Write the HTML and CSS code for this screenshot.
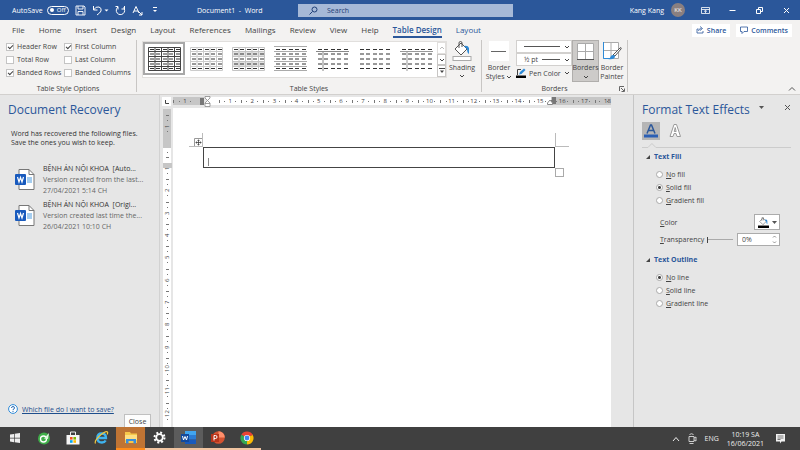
FILE: index.html
```html
<!DOCTYPE html>
<html lang="en">
<head>
  <meta charset="UTF-8">
  <meta name="viewport" content="width=device-width, initial-scale=1.0">
  <title>Document1 - Word</title>
  <link rel="stylesheet" href="styles.css">
</head>
<body>
  <!-- shared shapes -->
  <svg class="defs" width="0" height="0">
    <defs>
      <path id="dashes" d="M2 3.5h4M8 3.5h4M15 3.5h4M21 3.5h4M28 3.5h4M2 8h4M8 8h4M15 8h4M21 8h4M28 8h4M2 13h4M8 13h4M15 13h4M21 13h4M28 13h4M2 18h4M8 18h4M15 18h4M21 18h4M28 18h4M2 22.5h4M8 22.5h4M15 22.5h4M21 22.5h4M28 22.5h4" stroke="#333" fill="none"/>
      <path id="gridlines" d="M.5 1.5h32v23h-32zM.5 5.500h32M.5 10.500h32M.5 15.500h32M.5 20.500h32M7 1v24M13.500 1v24M20 1v24M26.500 1v24" fill="none"/>
      <g id="doc">
        <path d="M4 .5h10l5 5v15H4z" fill="#fff" stroke="#777"/>
        <path d="M14 .5v5h5" fill="none" stroke="#777"/>
        <path d="M12 9h5M12 11h5M12 13h5" stroke="#4a9be0"/>
        <rect x="0" y="5" width="11" height="11" rx="1" fill="#185abd"/>
        <path d="M2.500 8l1.500 5 1.500-4.500L7 13l1.500-5" fill="none" stroke="#fff" stroke-width="1.200"/>
      </g>
      <g id="bucket">
        <path d="M3 8l6-6 6 6-6 6z" fill="#fff" stroke="#555"/>
        <path d="M7 7V2q0-1.500 1.500-1.500T10 2v4" fill="none" stroke="#555"/>
        <path d="M12 5q4-1 5 2v6q-2-1-2-5z" fill="#2e8bd8"/>
      </g>
      <path id="down" d="M1 1l2 2 2-2" fill="none" stroke="currentColor"/>
    </defs>
  </svg>

  <header class="titlebar">
    <div class="quick">
      <label class="autosave">AutoSave <button class="switch"><i></i>Off</button></label>
      <button aria-label="Save"><svg width="11" height="11" viewBox="0 0 11 11"><path d="M1 1h8l1 1v8H1zM3 1v3h5V1M3 10V6.500h5V10" fill="none" stroke="#fff" stroke-width=".9"/></svg></button>
      <button aria-label="Undo"><svg width="17" height="11" viewBox="0 0 17 11"><path d="M1.500 1v4h4M1.500 5Q4 1 7 2t2 4q-1 2-4 4" fill="none" stroke="#fff"/><path d="M12.500 4.500h4l-2 2z" fill="#fff"/></svg></button>
      <button aria-label="Repeat"><svg width="11" height="11" viewBox="0 0 11 11"><path d="M3 2a4.200 4.200 0 1 0 5.500.5M9.500 1v3H6.500M.5 1.500H3v3" fill="none" stroke="#fff"/></svg></button>
      <button aria-label="Format"><svg width="11" height="11" viewBox="0 0 11 11"><path d="M1 8l3-6.500L7 8M2 6h4M6 6l4 4M7 10h3V7" fill="none" stroke="#fff"/></svg></button>
      <button aria-label="Customize"><svg class="customize" width="6" height="6" viewBox="0 0 6 6"><path d="M1 .5h4" stroke="#fff"/><path d="M1 3h4L3 5z" fill="#fff"/></svg></button>
    </div>
    <div class="doc-title">Document1 &nbsp;-&nbsp; Word</div>
    <label class="search">
      <svg width="9" height="9" viewBox="0 0 9 9"><circle cx="5.500" cy="3.500" r="2.500" fill="none" stroke="#1f3f77"/><path d="M3.500 5.500L.5 8.500" stroke="#1f3f77"/></svg>
      <input type="text" placeholder="Search" aria-label="Search">
    </label>
    <div class="account">Kang Kang <span class="avatar">KK</span></div>
    <div class="window-buttons">
      <button aria-label="Ribbon display"><svg width="9" height="9" viewBox="0 0 9 9"><path d="M.5 1.500h8v6h-8zM.5 3.500h8M4.500 7V4.500M3 5.500l1.500-1 1.500 1" fill="none" stroke="#fff" stroke-width=".8"/></svg></button>
      <button aria-label="Minimize"><svg width="9" height="9" viewBox="0 0 9 9"><path d="M1.500 4.500h6" stroke="#fff"/></svg></button>
      <button aria-label="Restore"><svg width="9" height="9" viewBox="0 0 9 9"><path d="M1.500 3.500h4v4h-4zM3.500 3V1.500h4v4H6" fill="none" stroke="#fff"/></svg></button>
      <button aria-label="Close window"><svg width="9" height="9" viewBox="0 0 9 9"><path d="M2 2l5 5M7 2L2 7" stroke="#fff"/></svg></button>
    </div>
  </header>

  <nav class="tabs">
    <a href="#">File</a>
    <a href="#">Home</a>
    <a href="#">Insert</a>
    <a href="#">Design</a>
    <a href="#">Layout</a>
    <a href="#">References</a>
    <a href="#">Mailings</a>
    <a href="#">Review</a>
    <a href="#">View</a>
    <a href="#">Help</a>
    <a href="#" class="active">Table Design</a>
    <a href="#" class="context">Layout</a>
    <div class="tab-actions">
      <button><svg width="8" height="8" viewBox="0 0 8 8"><path d="M2.500 3H1v4h6V5M2.500 5q0-2.500 3-2.500M4 .5l2.500 2-2.500 2" fill="none" stroke="#2b579a" stroke-width=".8"/></svg>Share</button>
      <button><svg width="8" height="8" viewBox="0 0 8 8"><path d="M.5 1h7v4.500H4l-2 2v-2H.5z" fill="none" stroke="#2b579a" stroke-width=".8"/></svg>Comments</button>
    </div>
  </nav>

  <section class="ribbon">
    <div class="group options">
      <div class="checks">
        <label><input type="checkbox" checked>Header Row</label>
        <label><input type="checkbox" checked>First Column</label>
        <label><input type="checkbox">Total Row</label>
        <label><input type="checkbox">Last Column</label>
        <label><input type="checkbox" checked>Banded Rows</label>
        <label><input type="checkbox">Banded Columns</label>
      </div>
      <div class="group-name">Table Style Options</div>
    </div>

    <div class="group styles">
      <div class="group-body">
        <div class="gallery">
          <button class="thumb selected" aria-label="Table Grid"><svg width="33" height="26"><use href="#gridlines" stroke="#444"/><use href="#dashes"/></svg></button>
          <button class="thumb" aria-label="Grid Light"><svg width="33" height="26"><use href="#gridlines" stroke="#ccc"/><use href="#dashes"/></svg></button>
          <button class="thumb" aria-label="Plain Table 1"><svg width="33" height="26"><path d="M0 5h33v5H0zM0 15h33v5H0z" fill="#e2e2e2"/><use href="#gridlines" stroke="#c4c4c4"/><use href="#dashes"/></svg></button>
          <button class="thumb" aria-label="Plain Table 2"><svg width="33" height="26"><path d="M0 .5h33M0 5.500h33M0 10.500h33M0 15.500h33M0 20.500h33M0 24.500h33" stroke="#aaa"/><use href="#dashes"/></svg></button>
          <button class="thumb" aria-label="Plain Table 3"><svg width="33" height="26"><path d="M0 5.500h33M7 5v20" stroke="#888" fill="none"/><use href="#dashes"/></svg></button>
          <button class="thumb" aria-label="Plain Table 4"><svg width="33" height="26"><use href="#dashes"/></svg></button>
          <button class="thumb" aria-label="Plain Table 5"><svg width="33" height="26"><path d="M0 5.500h33M7 5v20" stroke="#999" fill="none"/><use href="#dashes"/></svg></button>
          <div class="scroller">
            <button class="off" aria-label="Up"><svg width="6" height="4"><path d="M1 3l2-2 2 2" fill="none" stroke="#bbb"/></svg></button>
            <button aria-label="Down"><svg width="6" height="4"><use href="#down"/></svg></button>
            <button aria-label="More"><svg width="6" height="6"><path d="M0 .5h6" stroke="#444"/><path d="M1 2.500h4l-2 2.500z" fill="#444"/></svg></button>
          </div>
        </div>
        <button class="big shading">
          <svg width="20" height="20" viewBox="0 0 20 20"><use href="#bucket"/><rect x="1" y="15.500" width="18" height="4" fill="#fff" stroke="#aaa"/></svg>
          <span>Shading</span>
          <svg width="6" height="4"><use href="#down"/></svg>
        </button>
      </div>
      <div class="group-name">Table Styles</div>
    </div>

    <div class="group borders">
      <div class="group-body">
        <button class="big border-styles">
          <svg width="20" height="20"><path d="M0 0h20v20H0z" fill="#fff"/><path d="M2 10.500h15" stroke="#666"/></svg>
          <span>Border<br>Styles <svg width="6" height="4"><use href="#down"/></svg></span>
        </button>
        <div class="pen">
          <button class="pen-box"><i></i><svg width="6" height="4"><use href="#down"/></svg></button>
          <button class="pen-box">½ pt<i></i><svg width="6" height="4"><use href="#down"/></svg></button>
          <button class="pen-color"><svg width="10" height="10" viewBox="0 0 10 10"><path d="M1.500 7V1.500H5" fill="none" stroke="#444"/><path d="M3 6.500l1-2.500L8 .5 9.500 2l-4 4z" fill="#2e8bd8"/><path d="M0 7.500h10V10H0z" fill="#000"/></svg>Pen Color <svg width="6" height="4"><use href="#down"/></svg></button>
        </div>
        <button class="big pressed">
          <svg width="17" height="17"><path d="M.5.5h16v16H.5z" fill="#fff" stroke="#aaa"/><path d="M8.500 0v17M0 8.500h17" stroke="#aaa"/><path d="M0 16.500h17" stroke="#555"/></svg>
          <span>Borders</span>
          <svg width="6" height="4"><use href="#down"/></svg>
        </button>
        <button class="big painter">
          <svg width="19" height="19" viewBox="0 0 19 19"><path d="M.5.5h15v16H.5z" fill="#fff" stroke="#aaa"/><path d="M8 0v17M0 8.500h16" stroke="#aaa"/><path d="M.5 0v16.500H8" fill="none" stroke="#2e8bd8"/><path d="M10 13l7.500-7.500q1 0 .5 1.500L12 14z" fill="#fff" stroke="#555"/><path d="M5 17q2 0 3-3 2-2 4 0 0 4-7 3z" fill="#2e8bd8"/></svg>
          <span>Border<br>Painter</span>
        </button>
      </div>
      <div class="group-name">Borders <svg class="launcher" width="6" height="6"><path d="M.5 5V.5H5M2 2l3 3M5.500 2.500v3h-3" fill="none" stroke="#666"/></svg></div>
    </div>
    <button class="collapse" aria-label="Collapse ribbon"><svg width="8" height="6"><path d="M1 4.500l3-3 3 3" fill="none" stroke="#555"/></svg></button>
  </section>

  <main>
    <aside class="recovery">
      <h2>Document Recovery</h2>
      <p class="intro">Word has recovered the following files.<br>Save the ones you wish to keep.</p>
      <ul>
        <li>
          <svg width="20" height="22"><use href="#doc"/></svg>
          <div><b>BỆNH ÁN NỘI KHOA&nbsp; [Auto...</b><span>Version created from the last...</span><span>27/04/2021 5:14 CH</span></div>
        </li>
        <li>
          <svg width="20" height="22"><use href="#doc"/></svg>
          <div><b>BỆNH ÁN NỘI KHOA&nbsp; [Origi...</b><span>Version created last time the...</span><span>26/04/2021 10:10 CH</span></div>
        </li>
      </ul>
      <div class="help"><svg width="10" height="10" viewBox="0 0 10 10"><circle cx="5" cy="5" r="4.400" fill="#fff" stroke="#2e8bd8"/><path d="M3.500 4q0-1.500 1.500-1.500T6.500 4Q6.500 5 5 5.500v.7M5 7v1" fill="none" stroke="#2b6cb5"/></svg><a href="#">Which file do I want to save?</a></div>
      <button class="close">Close</button>
    </aside>

    <div class="ruler-v">
      <div class="tab-stop"><svg width="4" height="4"><path d="M.5 0v3.500H4" fill="none" stroke="#444"/></svg></div>
      <div class="ruler-v-track">
        <div class="v-margin"><span>1</span></div>
        <div class="v-cm"><i></i><span class="row-end">1</span><span>2</span><span>3</span><span>4</span><span>5</span><span>6</span><span>7</span><span>8</span><span>9</span><span>10</span><span>11</span><span>12</span></div>
      </div>
    </div>

    <div class="workspace">
      <div class="ruler-h">
        <div class="h-margin"><span>1</span><svg width="4" height="7"><path d="M0 0h4v7H0z" fill="#777"/></svg></div>
        <svg class="indent" width="7" height="11" viewBox="0 0 7 11"><path d="M1 .5h5v1.500L3.500 4.500 6 7v3.500H1V7l2.500-2.500L1 2zM1 7.500h5" fill="#fff" stroke="#888" stroke-width=".8"/></svg>
        <div class="h-cm"><i></i><span>1</span><span>2</span><span>3</span><span>4</span><span>5</span><span>6</span><span>7</span><span>8</span><span>9</span><span>10</span><span>11</span><span>12</span><span>13</span><span>14</span><span>15</span><span class="out">16</span><span class="out">17</span><span class="out last">18</span>
          <svg class="right-indent" width="9" height="8" viewBox="0 0 9 8"><path d="M5 0h4v7H5z" fill="#777"/><path d="M.5 7.500V6L3 3l2.500 3v1.500z" fill="#fff" stroke="#888"/></svg>
        </div>
      </div>
      <div class="page">
        <div class="table-area">
          <svg class="mover" width="9" height="9"><path d="M.5.5h8v8h-8z" fill="#fff" stroke="#999"/><path d="M4.500 1.500v6M1.500 4.500h6M3.500 2.500h2M3.500 6.500h2M2.500 3.500v2M6.500 3.500v2" stroke="#444" stroke-width=".8"/></svg>
          <i class="mark left"></i>
          <i class="mark right"></i>
          <table><tr><td><i class="caret"></i></td></tr></table>
          <i class="resizer"></i>
        </div>
      </div>
    </div>

    <aside class="effects">
      <div class="effects-head">
        <h2>Format Text Effects</h2>
        <button aria-label="Options"><svg width="5" height="3"><path d="M0 0h5L2.500 3z" fill="#555"/></svg></button>
        <button aria-label="Close pane"><svg width="7" height="7"><path d="M1 1l5 5M6 1L1 6" stroke="#555"/></svg></button>
      </div>
      <div class="effect-tabs">
        <button class="on" aria-label="Text Fill and Outline"><svg width="18" height="18" viewBox="0 0 18 18"><path d="M5 11.500L8.500 3h1L13 11.500M6.500 8.500h5" fill="none" stroke="#2b579a" stroke-width="1.500"/><path d="M2 12.500h14v3H2z" fill="#2b5fb4"/></svg></button>
        <button aria-label="Text Effects"><svg width="18" height="18" viewBox="0 0 18 18"><path d="M8 2.500h2.500l4 12H11l-1-3H8l-1 3H4z" fill="#fff" stroke="#999"/><path d="M9.200 5.500l1 4h-2z" fill="#e6e6e6" stroke="#888" stroke-width=".8"/></svg></button>
      </div>
      <svg class="rule" height="5" viewBox="0 0 150 5"><path d="M0 4.500h6l4-4 4 4h136" fill="none" stroke="#ccc"/></svg>
      <fieldset>
        <legend>Text Fill</legend>
        <label><input type="radio" name="fill"><span><u>N</u>o fill</span></label>
        <label><input type="radio" name="fill" checked><span><u>S</u>olid fill</span></label>
        <label><input type="radio" name="fill"><span><u>G</u>radient fill</span></label>
      </fieldset>
      <div class="field">
        <span><u>C</u>olor</span>
        <button class="color" aria-label="Color"><svg width="11" height="11" viewBox="0 0 20 20"><use href="#bucket"/><path d="M0 15.500h20v4.500H0z" fill="#000"/></svg><svg width="5" height="3"><path d="M0 0h5L2.500 3z" fill="#555"/></svg></button>
      </div>
      <div class="field">
        <label for="transparency"><u>T</u>ransparency</label>
        <input id="transparency" type="range" value="0">
        <div class="spin"><input type="text" value="0%" aria-label="Transparency value"><svg width="5" height="9"><path d="M1 2.500L2.500 1 4 2.500M1 6.500L2.500 8 4 6.500" fill="none" stroke="#777" stroke-width=".8"/></svg></div>
      </div>
      <fieldset class="outline">
        <legend>Text Outline</legend>
        <label><input type="radio" name="line" checked><span><u>N</u>o line</span></label>
        <label><input type="radio" name="line"><span><u>S</u>olid line</span></label>
        <label><input type="radio" name="line"><span><u>G</u>radient line</span></label>
      </fieldset>
    </aside>
  </main>

  <footer class="taskbar">
    <button aria-label="Start"><svg width="12" height="12" viewBox="0 0 12 12"><path d="M1 2.500l4-.6v3.800H1zM5.700 1.800L11 1v4.700H5.700zM1 6.400h4v3.800l-4-.6zM5.700 6.400H11V11l-5.300-.8z" fill="#eee"/></svg></button>
    <button aria-label="Browser"><svg width="14" height="14" viewBox="0 0 14 14"><circle cx="7" cy="7.500" r="6" fill="#3fae49"/><circle cx="6.500" cy="8" r="3" fill="none" stroke="#fff" stroke-width="1.300"/><path d="M7 7.500L12 2l-1 6z" fill="#dff5df"/></svg></button>
    <button aria-label="Store"><svg width="14" height="14" viewBox="0 0 14 14"><path d="M4.500 4V1h5v3" fill="none" stroke="#eee"/><path d="M.5 4h13v9.500H.5z" fill="#f5f5f5"/><path d="M4 6h2.600v2.600H4z" fill="#f25022"/><path d="M7.400 6H10v2.600H7.400z" fill="#7fba00"/><path d="M4 9.200h2.600v2.600H4z" fill="#00a4ef"/><path d="M7.400 9.200H10v2.600H7.400z" fill="#ffb900"/></svg></button>
    <button aria-label="Internet"><svg width="15" height="15" viewBox="0 0 15 15"><path d="M3.500 8H12q0-4.500-4.300-4.500T3.300 8q0 4.500 4.700 4.500 2.500 0 3.700-2" fill="none" stroke="#3fb4f0" stroke-width="2.300"/><path d="M1.500 13.500Q0 11 6 5.500 12 .5 13.500 2q.5 1-.5 2.500" fill="none" stroke="#f3c73c" stroke-width="1.200"/></svg></button>
    <button class="orange" aria-label="File Explorer"><svg width="14" height="13" viewBox="0 0 14 13"><path d="M1 1h5l1 1.500h6V12H1z" fill="#f7c84b"/><path d="M1 4h12v5H1z" fill="#ffdf83"/><path d="M2 12.500V8h10v4.500H9.500V10h-5v2.500z" fill="#3a8edb"/></svg></button>
    <button class="open" aria-label="Settings"><svg width="13" height="13" viewBox="0 0 13 13"><circle cx="6.500" cy="6.500" r="5" fill="none" stroke="#fff" stroke-width="2" stroke-dasharray="2 1.930"/><circle cx="6.500" cy="6.500" r="3.300" fill="none" stroke="#fff" stroke-width="1.800"/></svg></button>
    <button class="open current" aria-label="Word"><svg width="15" height="13" viewBox="0 0 15 13"><path d="M4 0h11v4H4z" fill="#41a5ee"/><path d="M4 4h11v4.500H4z" fill="#2b7cd3"/><path d="M4 8.500h11V13H4z" fill="#185abd"/><path d="M0 3h8v8H0z" fill="#124a9e"/><path d="M1.500 5l1 4L4 5.500 5.500 9l1-4" fill="none" stroke="#fff"/></svg></button>
    <button class="open" aria-label="PowerPoint"><svg width="14" height="13" viewBox="0 0 14 13"><circle cx="7.500" cy="6.500" r="6.300" fill="#d35230"/><path d="M7.500.2a6.300 6.300 0 0 1 6.300 6.300H7.500z" fill="#ff8f6b"/><path d="M0 3h8v8H0z" fill="#b7351b"/><path d="M3 9.500v-5h1.500q1.500 0 1.500 1.500T4.500 7.500H3" fill="none" stroke="#fff"/></svg></button>
    <button class="open" aria-label="Chrome"><svg width="14" height="14" viewBox="0 0 14 14"><path d="M7 7L1.370 3.750A6.500 6.500 0 0 1 12.630 3.750z" fill="#e94335"/><path d="M7 7L12.630 3.750A6.500 6.500 0 0 1 7 13.500z" fill="#fbbc05"/><path d="M7 7v6.500A6.500 6.500 0 0 1 1.370 3.750z" fill="#34a853"/><path d="M7 3.750h5.630" stroke="#e94335"/><circle cx="7" cy="7" r="3.100" fill="#fff"/><circle cx="7" cy="7" r="2.400" fill="#4285f4"/></svg></button>
    <div class="tray">
      <svg width="8" height="6"><path d="M1 5l3-3.500L7 5" fill="none" stroke="#eee"/></svg>
      <svg width="9" height="11" viewBox="0 0 9 11"><path d="M1 3.500h5v5H1zM6 5l2-1v4L6 7M1.500 1.500q2-1.500 4 0M1.500 10.500h4" fill="none" stroke="#ddd" stroke-width=".9"/></svg>
      <span>ENG</span>
      <time>10:19 SA<br>16/06/2021</time>
      <svg width="11" height="11" viewBox="0 0 11 11"><path d="M1 1h9v7.500H6.500L5 10.500v-2H1z" fill="#f2f2f2"/><path d="M2.500 3h6M2.500 5h6M2.500 6.500h3" stroke="#555" stroke-width=".8"/></svg>
    </div>
  </footer>
</body>
</html>
```
FILE: styles.css
```css
* {
  box-sizing: border-box;
}

body {
  margin: 0;
  height: 100vh;
  display: flex;
  flex-direction: column;
  overflow: hidden;
  font-family: "Open Sans", "Noto Sans", sans-serif;
  font-size: 7px;
  line-height: 9px;
  color: #444;
  background: #e6e6e6;
}

svg {
  display: block;
  flex: none;
}

.defs {
  position: absolute;
}

button, input {
  font: inherit;
  color: inherit;
  margin: 0;
  padding: 0;
  border: 0;
  background: none;
}

button {
  display: flex;
  align-items: center;
  justify-content: center;
}

a {
  color: inherit;
  text-decoration: none;
}

h2 {
  margin: 0;
  font-size: 12px;
  line-height: 16px;
  font-weight: normal;
  color: #2b579a;
}

/* Title bar */
.titlebar {
  flex: none;
  height: 20px;
  display: flex;
  align-items: center;
  background: #2b579a;
  color: #fff;
}

.quick {
  display: flex;
  align-items: center;
  gap: 6px;
  width: 197px;
  padding-left: 12px;
}

.autosave {
  display: flex;
  align-items: center;
  gap: 4px;
}

.switch {
  width: 22px;
  height: 9px;
  gap: 3px;
  border: 1px solid #fff;
  border-radius: 5px;
  font-size: 6px;
}

.switch i {
  width: 4px;
  height: 4px;
  border-radius: 50%;
  background: #fff;
}

.customize {
  margin-left: 3px;
}

.doc-title {
  width: 101px;
}

.search {
  width: 215px;
  height: 13px;
  display: flex;
  align-items: center;
  gap: 9px;
  padding-left: 11px;
  background: #a6b9d7;
}

.search input {
  flex: 1;
  min-width: 0;
}

.search input::placeholder {
  color: #1f3f77;
  opacity: 1;
}

.account {
  display: flex;
  align-items: center;
  gap: 7px;
  margin-left: auto;
}

.avatar {
  width: 14px;
  height: 14px;
  line-height: 14px;
  border-radius: 50%;
  background: #8a7f80;
  font-size: 6px;
  text-align: center;
}

.window-buttons {
  display: flex;
  gap: 18px;
  padding: 0 9px 0 16px;
}

/* Tabs */
.tabs {
  flex: none;
  height: 20px;
  display: flex;
  align-items: center;
  gap: 14px;
  padding: 0 8px 0 12px;
  background: #f3f2f1;
  font-size: 8px;
  line-height: 13px;
}

.tabs a {
  border-bottom: 2px solid transparent;
}

.tabs .active {
  color: #2b579a;
  font-weight: 600;
  border-color: #2b579a;
}

.tabs .context {
  color: #2b579a;
}

.tab-actions {
  display: flex;
  gap: 6px;
  margin-left: auto;
}

.tab-actions button {
  height: 13px;
  gap: 3px;
  padding: 0 4px;
  background: #fff;
  color: #2b579a;
  font-size: 7px;
  font-weight: 600;
}

/* Ribbon */
.ribbon {
  flex: none;
  height: 55px;
  display: flex;
  background: #f3f2f1;
  border-bottom: 1px solid #d2d0ce;
}

.group {
  display: flex;
  flex-direction: column;
  justify-content: space-between;
  margin-bottom: 2px;
  border-right: 1px solid #c8c6c4;
}

.group-name {
  display: flex;
  justify-content: center;
  align-items: center;
  line-height: 7px;
}

.launcher {
  margin-left: 51px;
  margin-right: -57px;
}

.group-body {
  display: flex;
}

.options {
  width: 137px;
}

.styles {
  width: 345px;
}

.borders {
  width: 146px;
}

.checks {
  display: grid;
  grid-template-columns: 58px 1fr;
  row-gap: 4px;
  padding: 2px 0 0 6px;
}

.checks label {
  display: flex;
  align-items: center;
  gap: 3px;
  white-space: nowrap;
}

.checks input {
  appearance: none;
  width: 8px;
  height: 8px;
  border: 1px solid #c4c4c4;
  background: #fff;
}

.checks input:checked::before {
  content: "";
  display: block;
  width: 4px;
  height: 2px;
  margin: 1px;
  border: solid #444;
  border-width: 0 0 1px 1px;
  transform: rotate(-45deg);
}

.gallery {
  display: flex;
  margin: 1px 0 0 5px;
  border: 1px solid #e1dfdd;
  background: #fff;
}

.thumb {
  width: 42px;
  height: 33px;
}

.thumb.selected {
  border: 2px solid #a8a8a8;
}

.scroller {
  display: flex;
  flex-direction: column;
  width: 9px;
}

.scroller button {
  flex: 1;
  border: 1px solid #c8c6c4;
}

.scroller .off {
  border-color: #e1dfdd;
}

.big {
  flex-direction: column;
  justify-content: flex-start;
  gap: 2px;
  line-height: 9px;
}

.big span svg, .pen-color svg {
  display: inline-block;
}

.shading {
  margin-left: auto;
  width: 30px;
  padding-top: 1px;
  margin-right: 4px;
}

.border-styles {
  width: 34px;
  padding-top: 1px;
}

.pen {
  width: 56px;
}

.pen-box {
  width: 100%;
  height: 13px;
  gap: 4px;
  padding: 0 1px 0 7px;
  border: 1px solid #d2d0ce;
  background: #fff;
}

.pen-box i {
  flex: 1;
  height: 1px;
  background: #555;
}

.pen-color {
  margin-top: 2px;
  gap: 3px;
  white-space: nowrap;
}

.pressed {
  width: 27px;
  height: 42px;
  padding-top: 2px;
  gap: 3px;
  border: 1px solid #b0aeac;
  background: #cdcbc9;
}

.painter {
  width: 26px;
  padding-top: 2px;
}

.collapse {
  align-self: flex-end;
  margin: 0 4px 2px auto;
}

/* Main area */
main {
  flex: 1;
  min-height: 0;
  display: flex;
}

.recovery {
  width: 160px;
  display: flex;
  flex-direction: column;
  padding: 7px 8px 0;
  border-right: 1px solid #d2d2d2;
}

.intro {
  margin: 11px 0 0 3px;
  color: #333;
  white-space: nowrap;
}

.recovery ul {
  list-style: none;
  margin: 17px 0 0;
  padding: 0 0 0 7px;
  display: grid;
  gap: 4px;
}

.recovery li {
  display: flex;
  align-items: center;
  gap: 8px;
  white-space: nowrap;
}

.recovery li div {
  display: grid;
  gap: 1px;
  line-height: 10px;
  color: #666;
}

.recovery b {
  font-weight: normal;
  color: #333;
}

.help {
  display: flex;
  align-items: center;
  gap: 4px;
  margin-top: auto;
}

.help a {
  color: #1e4e8c;
  text-decoration: underline;
}

.close {
  align-self: flex-end;
  width: 27px;
  height: 13px;
  border: 1px solid #c0c0c0;
  border-bottom: 0;
  background: #fdfdfd;
}

/* Rulers: tick between numbers, dots at the quarters */
.ruler-v {
  width: 13px;
  display: flex;
  flex-direction: column;
  align-items: center;
  padding-top: 2px;
}

.tab-stop {
  width: 9px;
  height: 9px;
  display: grid;
  place-items: center;
  background: #fff;
}

.ruler-v-track {
  flex: 1;
  min-height: 0;
  width: 8px;
  margin: 3px 0 0 1px;
  display: flex;
  flex-direction: column;
  background: #fff;
  font-size: 6px;
}

.v-margin {
  height: 39px;
  padding-top: 6px;
  background: #c6c6c6;
}

.v-cm {
  flex: 1;
  min-height: 0;
  display: grid;
  grid-template-rows: 9fr repeat(11, 22fr) 24fr;
}

.v-cm i {
  background: linear-gradient(#777, #777) 50% 50% / 1px 1px no-repeat;
}

.ruler-v span {
  min-height: 0;
  height: 22px;
  display: grid;
  place-items: center;
  writing-mode: vertical-rl;
  transform: rotate(180deg);
  background:
    linear-gradient(#777, #777) 50% 100% / 3px 1px no-repeat,
    linear-gradient(#777, #777) 50% 24% / 1px 1px no-repeat,
    linear-gradient(#777, #777) 50% 76% / 1px 1px no-repeat;
}

.ruler-v .row-end {
  background:
    linear-gradient(#777, #777) 50% 100% / 3px 1px no-repeat,
    linear-gradient(#777, #777) 50% 24% / 1px 1px no-repeat,
    linear-gradient(#c6c6c6, #c6c6c6) 0 65% / 100% 5px no-repeat;
}

.workspace {
  flex: 1;
  min-width: 0;
  display: flex;
  flex-direction: column;
  padding-right: 22px;
}

.ruler-h {
  flex: none;
  display: flex;
  align-items: center;
  height: 8px;
  margin: 2px 0 3px;
  font-size: 6px;
  line-height: 8px;
}

.h-margin {
  width: 31px;
  display: flex;
  align-items: center;
  justify-content: space-between;
  background: #c6c6c6;
}

.h-margin span {
  width: 24px;
}

.indent {
  position: relative;
  margin-right: -3px;
  z-index: 1;
}

.h-cm {
  flex: 1;
  min-width: 0;
  display: grid;
  grid-template-columns: 5fr repeat(17, 10fr) 7fr;
  background: #fff;
  position: relative;
}

.ruler-h span {
  min-width: 0;
  text-align: center;
  background:
    linear-gradient(#777, #777) 0 50% / 1px 3px no-repeat,
    linear-gradient(#777, #777) 24% 50% / 1px 1px no-repeat,
    linear-gradient(#777, #777) 76% 50% / 1px 1px no-repeat;
}

.ruler-h .out {
  background-color: #c6c6c6;
}

.ruler-h .last {
  text-align: right;
}

.right-indent {
  position: absolute;
  left: 84%;
  top: 0;
}

.page {
  flex: 1;
  min-height: 0;
  padding: 39px 56px 0 30px;
  background: #fff;
}

.table-area {
  position: relative;
}

.table-area table {
  width: 100%;
  border-collapse: collapse;
}

.table-area td {
  height: 20px;
  padding: 9px 4px 0;
  border: 1px solid #444;
}

.caret {
  display: block;
  width: 1px;
  height: 8px;
  background: #888;
}

.mover {
  position: absolute;
  left: -9px;
  top: -9px;
}

.mark {
  position: absolute;
  top: -14px;
  width: 14px;
  height: 14px;
  border-bottom: 1px solid #bbb;
}

.mark.left {
  right: 100%;
  border-right: 1px solid #bbb;
}

.mark.right {
  left: 100%;
  border-left: 1px solid #bbb;
}

.resizer {
  position: absolute;
  left: 100%;
  top: 100%;
  width: 9px;
  height: 9px;
  border: 1px solid #aaa;
  background: #fff;
}

/* Format Text Effects */
.effects {
  width: 167px;
  padding: 7px 9px 0 8px;
  border-left: 1px solid #c6c6c6;
}

.effects-head {
  display: flex;
  align-items: flex-start;
}

.effects-head h2 {
  flex: 1;
  white-space: nowrap;
}

.effects-head button {
  height: 11px;
}

.effects-head button + button {
  margin-left: 20px;
}

.effect-tabs {
  display: flex;
  gap: 6px;
  margin-top: 4px;
}

.effect-tabs .on {
  background: #b5b5b5;
}

.rule {
  width: 100%;
  margin-top: 3px;
}

fieldset {
  margin: 4px 0 0;
  padding: 0 0 0 14px;
  border: 0;
  display: grid;
  gap: 4px;
}

legend {
  margin: 0 0 9px -10px;
  padding: 0;
  font-weight: bold;
  color: #2b579a;
}

legend::before {
  content: "";
  display: inline-block;
  margin-right: 4px;
  border-left: 4px solid transparent;
  border-bottom: 4px solid #444;
}

fieldset label {
  display: flex;
  align-items: center;
  gap: 3px;
}

input[type="radio"] {
  appearance: none;
  width: 7px;
  height: 7px;
  border: 1px solid #aaa;
  border-radius: 50%;
  background: #fff;
}

input[type="radio"]:checked {
  background: radial-gradient(circle, #444 1px, #fff 2px);
}

.field {
  display: flex;
  align-items: center;
  margin: 3px 11px 0 18px;
}

fieldset + .field {
  margin-top: 9px;
}

.color {
  width: 26px;
  height: 16px;
  gap: 3px;
  margin-left: auto;
  border: 1px solid #ababab;
  background: #fff;
}

input[type="range"] {
  appearance: none;
  flex: 1;
  min-width: 0;
  height: 9px;
  margin: 0 4px 0 3px;
  background: linear-gradient(#aaa, #aaa) 0 50% / 100% 1px no-repeat;
}

input[type="range"]::-webkit-slider-thumb {
  appearance: none;
  width: 1px;
  height: 6px;
  background: #444;
}

.spin {
  width: 43px;
  height: 13px;
  display: flex;
  align-items: center;
  padding: 0 2px 0 4px;
  border: 1px solid #ababab;
  background: #fff;
}

.spin input {
  flex: 1;
  min-width: 0;
}

.outline {
  margin-top: 9px;
}

/* Taskbar */
.taskbar {
  flex: none;
  height: 23px;
  display: flex;
  background: #404040;
  color: #eee;
}

.taskbar button {
  width: 29px;
  border-bottom: 2px solid transparent;
}

.taskbar .orange {
  background: #bf7434;
  border-color: #ff8c1a;
}

.taskbar .open {
  border-color: #f0c3a0;
}

.taskbar .current {
  background: #5c5c5c;
}

.tray {
  display: flex;
  align-items: center;
  gap: 8px;
  margin-left: auto;
  padding-right: 14px;
}

.tray time {
  text-align: center;
}

.tray time + svg {
  margin-left: 3px;
}
```
